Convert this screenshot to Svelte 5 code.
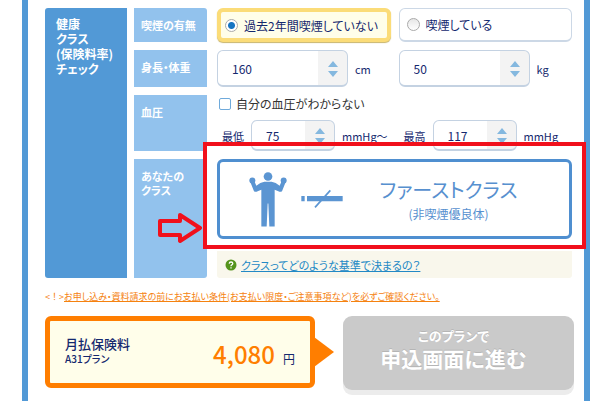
<script lang="ts">
  let smoking = 'no';
  let height = '160';
  let weight = '50';
  let low = '75';
  let high = '117';
  let unknownPressure = false;

  const heights = ['150', '155', '160', '165', '170', '175'];
  const weights = ['45', '50', '55', '60', '65'];
  const lows = ['70', '75', '80', '85'];
  const highs = ['110', '117', '120', '130'];
</script>

{#snippet arrows()}
  <svg class="arrows" viewBox="0 0 10 16" aria-hidden="true">
    <path d="M5 0 L10 6 H0 Z M0 10 H10 L5 16 Z" />
  </svg>
{/snippet}

<main class="panel">
  <form class="check">
    <h2 class="side">健康<br />クラス<br />(保険料率)<br />チェック</h2>

    <div class="rows">
      <h3>喫煙の有無</h3>
      <div class="pair">
        <label class="choice" class:selected={smoking === 'no'}>
          <input type="radio" name="smoking" value="no" bind:group={smoking} />
          過去2年間喫煙していない
        </label>
        <label class="choice" class:selected={smoking === 'yes'}>
          <input type="radio" name="smoking" value="yes" bind:group={smoking} />
          喫煙している
        </label>
      </div>

      <h3>身長・体重</h3>
      <div class="pair">
        <label class="measure">
          <span class="picker large">
            <select bind:value={height} aria-label="身長">
              {#each heights as h}<option>{h}</option>{/each}
            </select>
            {@render arrows()}
          </span>
          cm
        </label>
        <label class="measure">
          <span class="picker large">
            <select bind:value={weight} aria-label="体重">
              {#each weights as w}<option>{w}</option>{/each}
            </select>
            {@render arrows()}
          </span>
          kg
        </label>
      </div>

      <h3>血圧</h3>
      <div class="pressure">
        <label class="unknown">
          <input type="checkbox" bind:checked={unknownPressure} />
          自分の血圧がわからない
        </label>
        <div class="pair">
          <label class="measure inset">
            最低
            <span class="picker">
              <select bind:value={low}>
                {#each lows as l}<option>{l}</option>{/each}
              </select>
              {@render arrows()}
            </span>
            mmHg～
          </label>
          <label class="measure inset">
            最高
            <span class="picker">
              <select bind:value={high}>
                {#each highs as h}<option>{h}</option>{/each}
              </select>
              {@render arrows()}
            </span>
            mmHg
          </label>
        </div>
      </div>

      <h3>あなたの<br />クラス</h3>
      <div class="class-cell">
        <div class="result">
          <svg class="person" viewBox="25 20 120 170" aria-hidden="true">
            <circle cx="85" cy="36" r="13" />
            <circle cx="38" cy="48" r="9" />
            <circle cx="132" cy="48" r="9" />
            <path d="M31 50 L43 47 L50 64 Q62 54 74 52 H96 Q108 54 120 64 L127 47 L139 50 L127 80 Q122 84 116 80 L105 76 V186 H89 L86 117 H84 L81 186 H65 V76 L54 80 Q48 84 43 80 Z" />
          </svg>
          <svg class="cigarette" viewBox="180 78 132 60" aria-hidden="true">
            <path d="M184 99 h10 v16 h-10 Z M201 99 h107 v16 h-107 Z" />
            <path class="slash" d="M225 133 L271 82" />
          </svg>
          <p class="class-name">
            <strong>ファーストクラス</strong>
            <span>(非喫煙優良体)</span>
          </p>
        </div>
        <div class="marker" aria-hidden="true"></div>
        <svg class="pointer" viewBox="0 0 44 32" aria-hidden="true">
          <path d="M2 9 H22 V3 L42 16 L22 29 V23 H2 Z" />
        </svg>
        <p class="help">
          <svg viewBox="0 0 12 12" aria-hidden="true">
            <circle cx="6" cy="6" r="5.5" />
            <path d="M4.2 4.6 Q4.4 3 6 3 Q7.8 3 7.8 4.5 Q7.8 5.3 6.8 5.8 Q6 6.2 6 7.2 M6 8.2 V9.4" />
          </svg>
          <a href="#class">クラスってどのような基準で決まるの？</a>
        </p>
      </div>
    </div>
  </form>

  <p class="notice">
    <span>&lt;！&gt;</span><a href="#conditions">お申し込み・資料請求の前にお支払い条件(お支払い限度・ご注意事項など)を必ずご確認ください。</a>
  </p>

  <div class="footer">
    <section class="price">
      <div class="plan">
        <h4>月払保険料</h4>
        <span>A31プラン</span>
      </div>
      <p class="amount"><strong>4,080</strong>円</p>
    </section>
    <button class="apply" type="button">
      <span>このプランで</span>
      申込画面に進む
    </button>
  </div>
</main>

<style>
  :global(body) {
    background: #fff;
  }

  .panel {
    box-sizing: border-box;
    min-height: 100vh;
    margin: 0 10px 0 22px;
    padding: 8px 10px 0 17px;
    border: solid #5299d6;
    border-width: 0 6px;
    color: #14286e;
    font-family: "Noto Sans CJK JP", sans-serif;
    font-size: 12px;
    font-feature-settings: "palt";
  }

  h2,
  h3,
  h4,
  p {
    margin: 0;
  }

  .check {
    display: flex;
    gap: 7px;
    padding-right: 2px;
  }

  .side {
    box-sizing: border-box;
    flex: 0 0 82px;
    padding: 8px 0 0 11px;
    border-radius: 3px 0 0 3px;
    background: #5299d6;
    color: #fff;
    font-size: 12px;
    line-height: 15px;
  }

  .rows {
    flex: 1;
    display: grid;
    grid-template-columns: 73px 1fr;
    grid-template-rows: 34px 37px 56px auto;
    gap: 8px 10px;
  }

  h3 {
    padding: 10px 0 0 7px;
    background: #92c2ed;
    color: #fff;
    font-size: 11px;
    line-height: 14px;
  }

  h3:first-child {
    border-top-right-radius: 3px;
  }

  h3:last-of-type {
    border-bottom-right-radius: 3px;
  }

  .pair {
    display: grid;
    grid-template-columns: 1fr 1fr;
    gap: 8px;
  }

  .choice {
    display: flex;
    align-items: center;
    gap: 6px;
    padding-left: 7px;
    border: 1px solid #ccd8e6;
    border-bottom-width: 2px;
    border-radius: 6px;
  }

  .choice.selected {
    padding-left: 4px;
    border: 4px solid #fbdc78;
    background: #fffee9;
    box-shadow: 0 1px 1px #c9b56a;
  }

  .choice input {
    appearance: none;
    box-sizing: border-box;
    width: 13px;
    height: 13px;
    margin: 0;
    border: 1px solid #aaa;
    border-radius: 50%;
    background: linear-gradient(#e6e6e6, #fff);
  }

  .choice input:checked {
    background: radial-gradient(circle, #1675c2 3px, #fff 4px);
  }

  .measure {
    display: flex;
    align-items: center;
    gap: 7px;
    font-size: 11px;
  }

  .measure.inset {
    padding-left: 5px;
  }

  .picker {
    position: relative;
    display: flex;
    width: 84px;
    height: 31px;
  }

  .picker.large {
    width: 131px;
    height: 37px;
  }

  select {
    appearance: none;
    box-sizing: border-box;
    width: 100%;
    padding: 0 0 0 14px;
    border: 1px solid #c4d2e2;
    border-bottom-width: 2px;
    border-radius: 6px;
    background: linear-gradient(#f3f3f3, #f3f3f3) right / 29px 100% no-repeat #fff;
    color: inherit;
    font: 12px "Noto Sans CJK JP", sans-serif;
  }

  .arrows {
    position: absolute;
    top: 50%;
    right: 10px;
    width: 10px;
    height: 16px;
    transform: translateY(-50%);
    fill: #84b8df;
    pointer-events: none;
  }

  .unknown {
    display: flex;
    align-items: center;
    gap: 5px;
    height: 17px;
    margin-bottom: 8px;
    padding-left: 2px;
    color: #333;
  }

  .unknown input {
    appearance: none;
    box-sizing: border-box;
    width: 12px;
    height: 12px;
    margin: 0;
    border: 1px solid #6faadb;
    border-radius: 2px;
  }

  .unknown input:checked {
    background: #6faadb;
  }

  .class-cell {
    position: relative;
  }

  .result {
    box-sizing: border-box;
    display: flex;
    align-items: center;
    height: 80px;
    padding: 0 16px 0 28px;
    border: 3px solid #4f8fd0;
    border-radius: 6px;
    color: #5790cf;
  }

  .result svg {
    fill: #5b95d2;
  }

  .person {
    width: 40px;
    height: 57px;
  }

  .cigarette {
    width: 44px;
    height: 20px;
    margin-left: 12px;
  }

  .slash {
    stroke: #5b95d2;
    stroke-width: 5;
  }

  .class-name {
    flex: 1;
    text-align: center;
  }

  .class-name strong,
  .class-name span {
    display: block;
  }

  .class-name strong {
    font-size: 20px;
    font-weight: 400;
    line-height: 29px;
  }

  .class-name span {
    line-height: 20px;
  }

  /* highlight around the class result */
  .marker {
    position: absolute;
    top: -17px;
    right: -14px;
    left: -14px;
    height: 99px;
    border: 4px solid #f1101c;
  }

  .pointer {
    position: absolute;
    top: 53px;
    left: -59px;
    width: 44px;
    height: 32px;
    fill: none;
    stroke: #f1101c;
    stroke-width: 4;
    stroke-linejoin: round;
  }

  .help {
    display: flex;
    align-items: center;
    gap: 4px;
    height: 27px;
    margin-top: 12px;
    padding-left: 8px;
    border-radius: 0 0 3px 3px;
    background: #f9f7ec;
    font-size: 11px;
  }

  .help svg {
    width: 12px;
    height: 12px;
    fill: #55941c;
  }

  .help path {
    fill: none;
    stroke: #fff;
    stroke-width: 1.3;
  }

  .help a {
    color: #2389c5;
  }

  .notice {
    margin-top: 11px;
    color: #f5820f;
    font-size: 9px;
    line-height: 16px;
  }

  .notice span {
    font-feature-settings: normal;
  }

  .notice a {
    color: inherit;
  }

  .footer {
    display: flex;
    align-items: flex-start;
    gap: 28px;
    margin-top: 11px;
    padding-bottom: 11px;
  }

  .price {
    position: relative;
    box-sizing: border-box;
    flex: 1 1 270px;
    display: flex;
    justify-content: space-between;
    height: 72px;
    padding: 15px 15px 0;
    border: 5px solid #ff7e00;
    border-radius: 6px;
    background: #fffeea;
  }

  .price::after {
    position: absolute;
    top: 16px;
    left: 100%;
    margin-left: 4px;
    border: solid transparent;
    border-width: 15px 0 15px 20px;
    border-left-color: #ff7e00;
    content: "";
  }

  .plan h4 {
    font-size: 13px;
    font-weight: 500;
    line-height: 16px;
  }

  .plan span {
    display: block;
    font-size: 10px;
    font-weight: 500;
    line-height: 14px;
  }

  .amount strong {
    margin-right: 8px;
    color: #ff7e00;
    font-size: 24px;
    font-weight: 500;
    line-height: 36px;
  }

  .apply {
    flex: 1 1 231px;
    height: 74px;
    padding: 0 10px 9px 0;
    border: 0;
    border-radius: 9px;
    background: #cacaca;
    box-shadow: 0 5px 0 #ececec;
    color: #fff;
    font: 700 21px/26px "Noto Sans CJK JP", sans-serif;
    font-feature-settings: "palt";
    text-shadow: 0 -1px 0 #b5b5b5;
  }

  .apply span {
    display: block;
    font-size: 13px;
    line-height: 18px;
  }
</style>
